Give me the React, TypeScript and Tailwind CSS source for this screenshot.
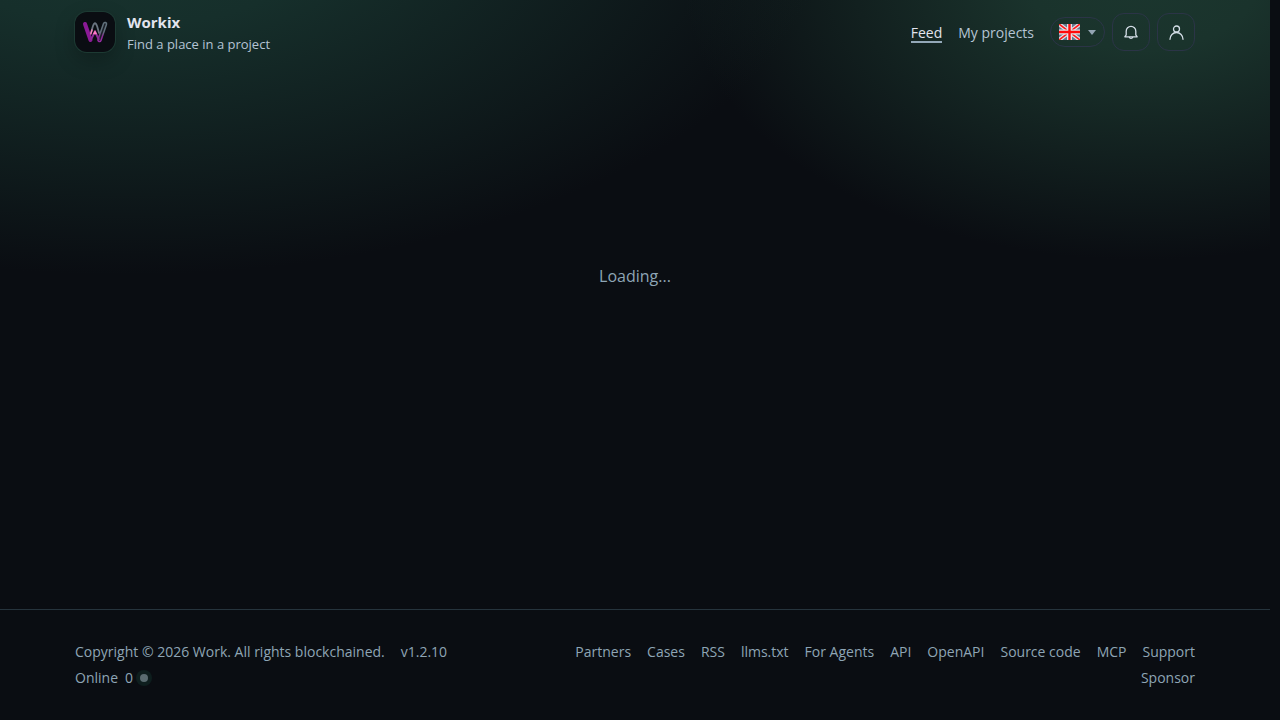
import React from "react";

type LinkItem = {
    label: string;
    href: string;
};

const footerLinks: LinkItem[] = [
    { label: "Partners", href: "#partners" },
    { label: "Cases", href: "#cases" },
    { label: "RSS", href: "#rss" },
    { label: "llms.txt", href: "#llms" },
    { label: "For Agents", href: "#agents" },
    { label: "API", href: "#api" },
    { label: "OpenAPI", href: "#openapi" },
    { label: "Source code", href: "#source" },
    { label: "MCP", href: "#mcp" },
    { label: "Support", href: "#support" },
    { label: "Sponsor", href: "#sponsor" },
];

const Logo: React.FC = () => (
    <span className="flex size-10 items-center justify-center rounded-xl bg-[#0a0d12] shadow-[0_8px_20px_rgba(0,0,0,0.25)] ring-1 ring-[#1d3a33]">
        <svg width="28" height="28" viewBox="0 0 28 28" fill="none" aria-hidden="true">
            <defs>
                <linearGradient id="outline" x1="0" y1="23" x2="0" y2="5" gradientUnits="userSpaceOnUse">
                    <stop offset="0" stopColor="#9a2aa5" />
                    <stop offset="0.25" stopColor="#8b2a95" />
                    <stop offset="0.5" stopColor="#61717c" />
                </linearGradient>
            </defs>
            <path d="M4 6L9.5 22" stroke="#8b1a96" strokeWidth="4" strokeLinecap="round" />
            <path d="M18.5 22L24 6" stroke="url(#outline)" strokeWidth="4.6" strokeLinecap="round" />
            <path d="M18.5 22L24 6" stroke="#1c2029" strokeWidth="1.6" strokeLinecap="round" />
            <path d="M9.8 15.5L11.8 8.5Q14 2 16.2 8.5L18.2 15.5" stroke="#6a7480" strokeWidth="1.8" />
            <path d="M9.8 22L14 13.5L18 22" stroke="#8b2a95" strokeWidth="2" strokeLinejoin="round" />
            <path d="M9.6 16.5L11.2 11.5M12.6 16.4L14 13.5L15.4 16.4" stroke="#ff7dc0" strokeWidth="1.4" />
        </svg>
    </span>
);

const Flag: React.FC = () => (
    <svg width="21" height="16" viewBox="0 0 21 16" aria-hidden="true">
        <rect width="21" height="16" fill="#66758a" />
        <path d="M0 0L21 16M21 0L0 16" stroke="#dfe3ea" strokeWidth="4" />
        <path d="M0 0L21 16M21 0L0 16" stroke="#ff1a1a" strokeWidth="1.6" />
        <path d="M10.5 0V16M0 8H21" stroke="#dfe3ea" strokeWidth="5" />
        <path d="M10.5 0V16M0 8H21" stroke="#ff0a0a" strokeWidth="2.4" />
    </svg>
);

const Header: React.FC = () => (
    <header className="mx-auto flex h-16 w-full max-w-[1120px] items-center justify-between">
        <a href="#home" className="flex items-center gap-3">
            <Logo />
            <span className="flex flex-col">
                <span className="text-[15px] leading-6 font-bold text-[#e2e4ee]">Workix</span>
                <span className="text-[13px] leading-5 text-[#b4c4d4]">Find a place in a project</span>
            </span>
        </a>

        <div className="flex items-center gap-4">
            <nav className="flex items-baseline gap-4 pt-[2px] text-sm leading-5">
                <a href="#feed" className="border-b-2 border-[#93a8b8] leading-4 text-[#e2e4ee]">
                    Feed
                </a>
                <a href="#projects" className="text-[#b4c4d4]">
                    My projects
                </a>
            </nav>

            <div className="flex items-center gap-[7px]">
                <button
                    aria-label="Language"
                    className="flex h-[30px] items-center gap-2 rounded-full border border-[#2b3447] px-2"
                >
                    <Flag />
                    <svg width="8" height="5" viewBox="0 0 8 5" aria-hidden="true">
                        <path d="M0 0H8L4 5Z" fill="#93a4b3" />
                    </svg>
                </button>
                <button
                    aria-label="Notifications"
                    className="flex size-[38px] items-center justify-center rounded-xl border border-[#2b3447] text-[#d3dde6]"
                >
                    <svg width="16" height="16" viewBox="0 0 16 16" fill="none" stroke="currentColor" strokeWidth="1.3" strokeLinejoin="round" aria-hidden="true">
                        <path d="M1.8 12.8H14.2L12.8 10.8V7.2A4.8 4.8 0 0 0 3.2 7.2V10.8L1.8 12.8Z" />
                        <path d="M6.2 13A1.9 1.9 0 0 0 9.8 13" />
                    </svg>
                </button>
                <button
                    aria-label="Profile"
                    className="flex size-[38px] items-center justify-center rounded-xl border border-[#2b3447] text-[#d3dde6]"
                >
                    <svg width="16" height="16" viewBox="0 0 16 16" fill="none" stroke="currentColor" strokeWidth="1.3" strokeLinecap="round" aria-hidden="true">
                        <circle cx="8.5" cy="5" r="3" />
                        <path d="M2 15.3A6.5 6.8 0 0 1 15 15.3" />
                    </svg>
                </button>
            </div>
        </div>
    </header>
);

const Footer: React.FC = () => (
    <footer className="border-t border-[#26343d] py-[29px] text-sm leading-[26px] text-[#8ea5b5]">
        <div className="mx-auto flex w-full max-w-[1120px] items-start justify-between gap-4">
            <div>
                <div className="flex gap-4">
                    <span>Copyright © 2026 Work. All rights blockchained.</span>
                    <span>v1.2.10</span>
                </div>
                <div className="flex items-center gap-[7px]">
                    <span>Online</span>
                    <span>0</span>
                    <span className="size-2 rounded-full bg-[#5a6b70] ring-4 ring-[#0e1e1e]" />
                </div>
            </div>
            <nav className="flex max-w-[640px] flex-wrap justify-end gap-x-4">
                {footerLinks.map((item) => (
                    <a key={item.label} href={item.href}>
                        {item.label}
                    </a>
                ))}
            </nav>
        </div>
    </footer>
);

const App: React.FC = () => {
    return (
        <div className="min-h-screen bg-[#0a0d12] pr-[10px] font-['Open_Sans','Noto_Sans',sans-serif] antialiased">
            <div className="flex min-h-screen flex-col bg-[radial-gradient(700px_355px_at_10%_-80px,#18352f,#162f2b_30%,transparent),radial-gradient(460px_280px_at_90%_-20px,#1b362e,#1a332c_25%,transparent)]">
                <Header />
                <main className="flex-1 pt-[200px] text-center text-base leading-6 text-[#8ea5b5]">
                    Loading...
                </main>
                <Footer />
            </div>
        </div>
    );
};

export default App;
